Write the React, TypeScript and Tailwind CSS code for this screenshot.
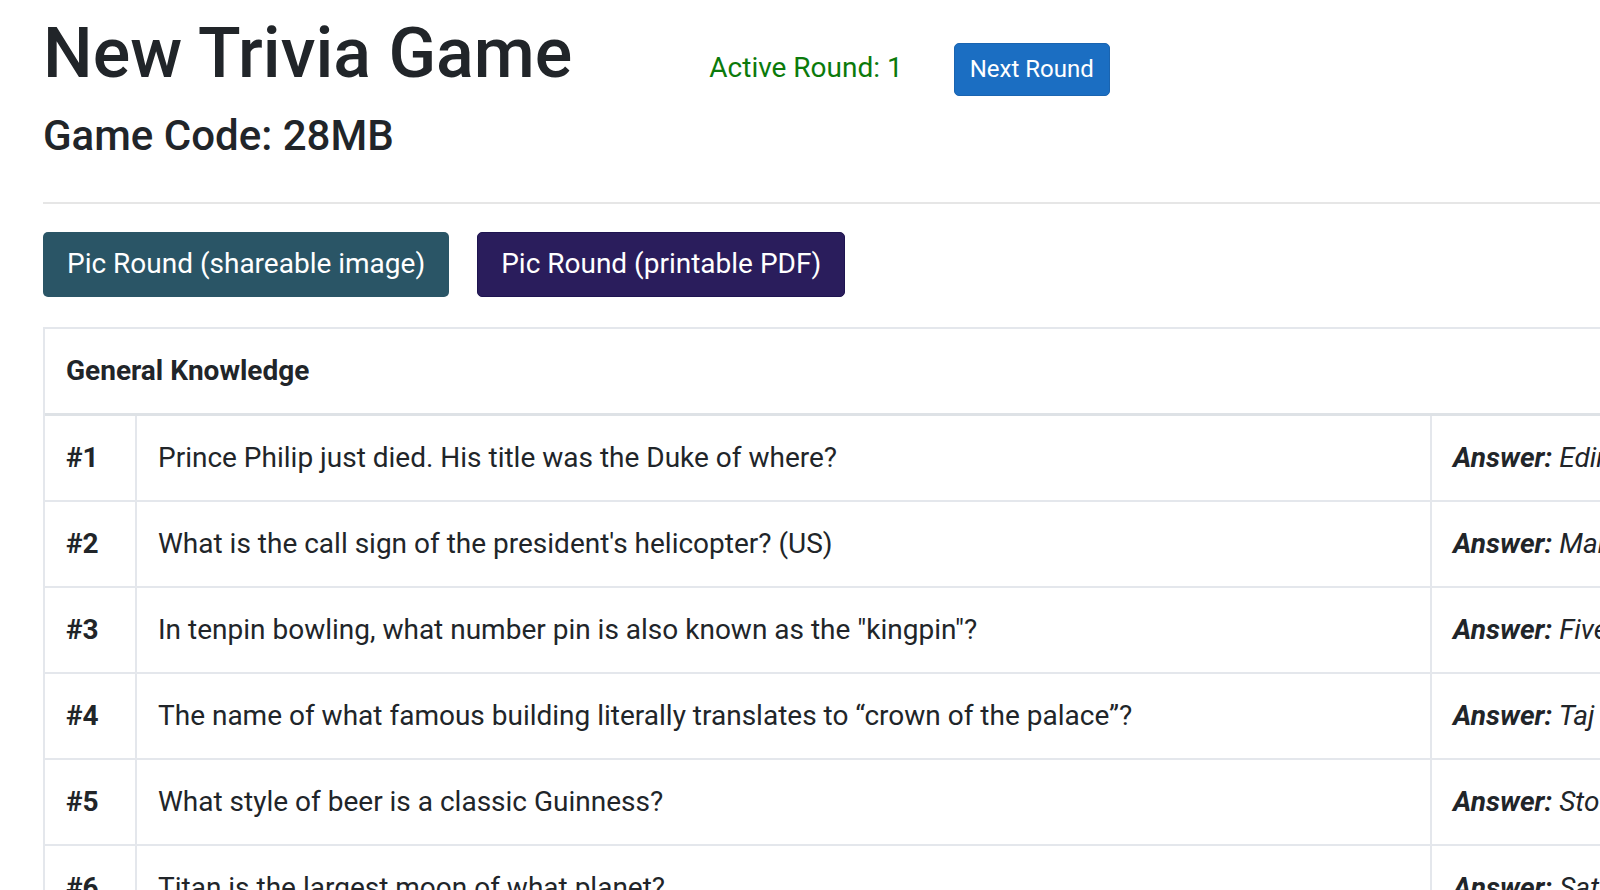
import React from "react";

type Question = {
  id: number;
  text: string;
  answer: string;
};

const questions: Question[] = [
  { id: 1, text: "Prince Philip just died. His title was the Duke of where?", answer: "Edinburgh" },
  { id: 2, text: "What is the call sign of the president's helicopter? (US)", answer: "Marine One" },
  { id: 3, text: 'In tenpin bowling, what number pin is also known as the "kingpin"?', answer: "Five" },
  { id: 4, text: "The name of what famous building literally translates to \u201ccrown of the palace\u201d?", answer: "Taj Mahal" },
  { id: 5, text: "What style of beer is a classic Guinness?", answer: "Stout" },
  { id: 6, text: "Titan is the largest moon of what planet?", answer: "Saturn" },
];

export default function App() {
  return (
    <div
      className="h-[890px] w-[1600px] overflow-hidden bg-white text-[#212529]"
      style={{ fontFamily: "Roboto, 'Noto Sans', Arial, sans-serif" }}
    >
      <div className="pl-[43px]">
        {/* Header */}
        <div className="flex items-baseline pt-[11px]">
          <h1 className="text-[70px] font-medium leading-[1.2]">New Trivia Game</h1>
          <span className="ml-[137px] text-[28px] text-[#0b7a0b]">Active Round: 1</span>
          <button className="ml-[51px] h-[53px] rounded-[5px] border border-[#1a64b0] bg-[#1b6ec2] px-[15px] text-[24px] text-white">
            Next Round
          </button>
        </div>
        <h3 className="mt-[15px] text-[42px] font-medium leading-[1.2]">Game Code: 28MB</h3>

        <hr className="mt-[41px] border-t-2 border-[#e6e6e6]" />

        {/* Picture round buttons */}
        <div className="mt-[28px] flex gap-[28px]">
          <button className="h-[65px] rounded-[5px] bg-[#2a5566] px-[24px] text-[28px] text-white">
            Pic Round (shareable image)
          </button>
          <button className="h-[65px] rounded-[5px] border border-[#1e1450] bg-[#2a1d5c] px-[23px] text-[28px] text-white">
            Pic Round (printable PDF)
          </button>
        </div>

        {/* Round card */}
        <div className="mt-[30px] w-[1700px] border-2 border-[#e4e7ec]">
          <div className="flex h-[87px] items-center border-b-[3px] border-[#dee2e6] px-[21px] text-[28px] font-bold">
            General Knowledge
          </div>
          {questions.map((q) => (
            <div
              key={q.id}
              className="grid h-[86px] grid-cols-[92px_1295px_1fr] border-b-2 border-[#e4e7ec] text-[28px]"
            >
              <div className="flex items-center border-r-2 border-[#e4e7ec] pl-[21px] font-bold">#{q.id}</div>
              <div className="flex items-center border-r-2 border-[#e4e7ec] pl-[21px]">{q.text}</div>
              <div className="flex items-center pl-[21px] italic">
                <span className="whitespace-nowrap">
                  <span className="font-bold">Answer:</span> {q.answer}
                </span>
              </div>
            </div>
          ))}
        </div>
      </div>
    </div>
  );
}
